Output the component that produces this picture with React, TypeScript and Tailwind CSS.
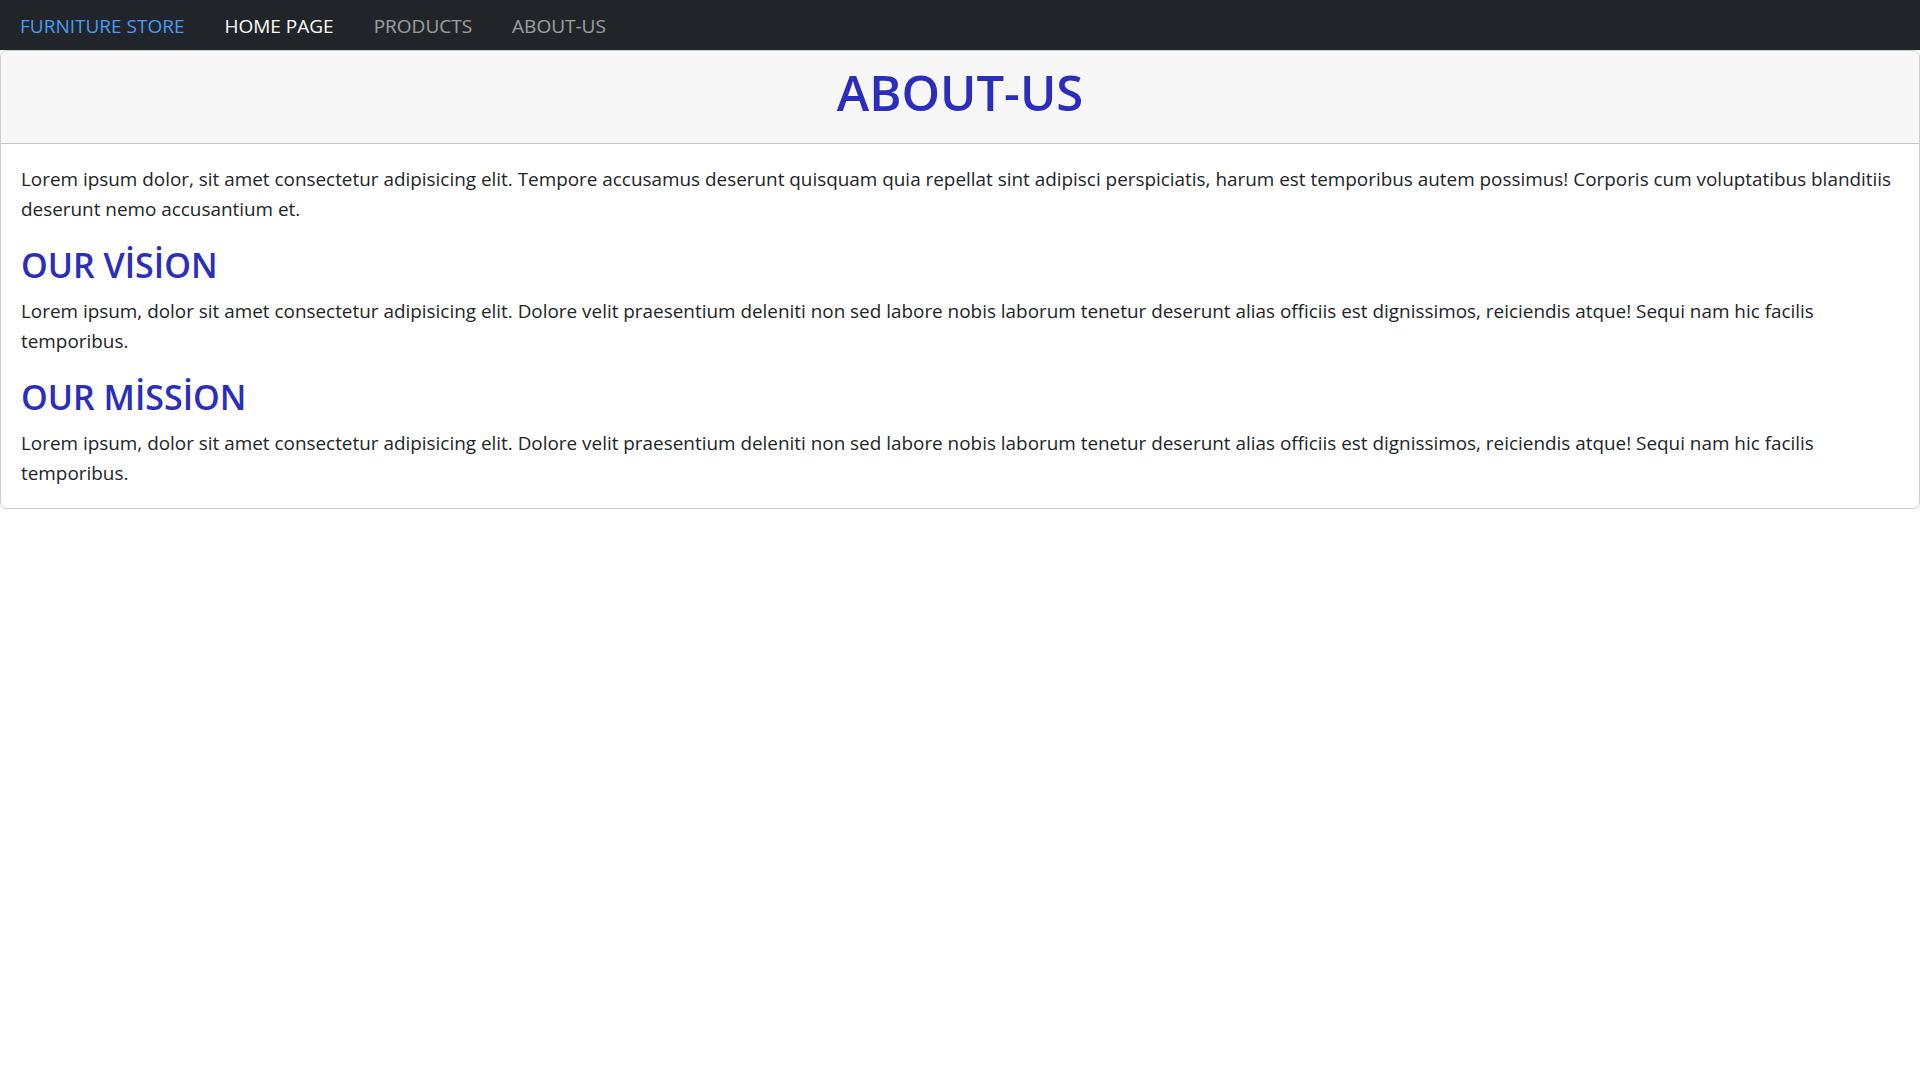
export default function App() {
  const font = { fontFamily: '"Open Sans", "Noto Sans", Arial, sans-serif' };
  return (
    <div className="min-h-screen bg-white text-[#212529]" style={font}>
      {/* Navbar */}
      <nav className="h-[50px] bg-[#212529] flex items-center gap-10 px-5 pt-[2px] text-[19px]">
        <a className="text-[#459cf5]">FURNITURE STORE</a>
        <a className="text-white">HOME PAGE</a>
        <a className="text-white/55">PRODUCTS</a>
        <a className="text-white/55">ABOUT-US</a>
      </nav>

      {/* Kart */}
      <div className="border border-black/20 rounded-[7px] overflow-hidden">
        <div className="h-[93px] bg-[#f7f7f7] border-b border-black/20 flex items-center justify-center pb-[10px]">
          <h1 className="text-[49px] font-semibold text-[#2b2dbd] leading-none">ABOUT-US</h1>
        </div>
        <div className="p-5 text-[18.9px] leading-[30px]">
          <p className="mb-5">
            Lorem ipsum dolor, sit amet consectetur adipisicing elit. Tempore accusamus deserunt quisquam quia repellat sint adipisci perspiciatis, harum est temporibus autem possimus! Corporis cum voluptatibus blanditiis deserunt nemo accusantium et.
          </p>
          <h3 className="text-[34px] font-semibold leading-[42px] mb-[10px] text-[#2b2dbd]">OUR VİSİON</h3>
          <p className="mb-5">
            Lorem ipsum, dolor sit amet consectetur adipisicing elit. Dolore velit praesentium deleniti non sed labore nobis laborum tenetur deserunt alias officiis est dignissimos, reiciendis atque! Sequi nam hic facilis temporibus.
          </p>
          <h3 className="text-[34px] font-semibold leading-[42px] mb-[10px] text-[#2b2dbd]">OUR MİSSİON</h3>
          <p>
            Lorem ipsum, dolor sit amet consectetur adipisicing elit. Dolore velit praesentium deleniti non sed labore nobis laborum tenetur deserunt alias officiis est dignissimos, reiciendis atque! Sequi nam hic facilis temporibus.
          </p>
        </div>
      </div>
    </div>
  );
}
